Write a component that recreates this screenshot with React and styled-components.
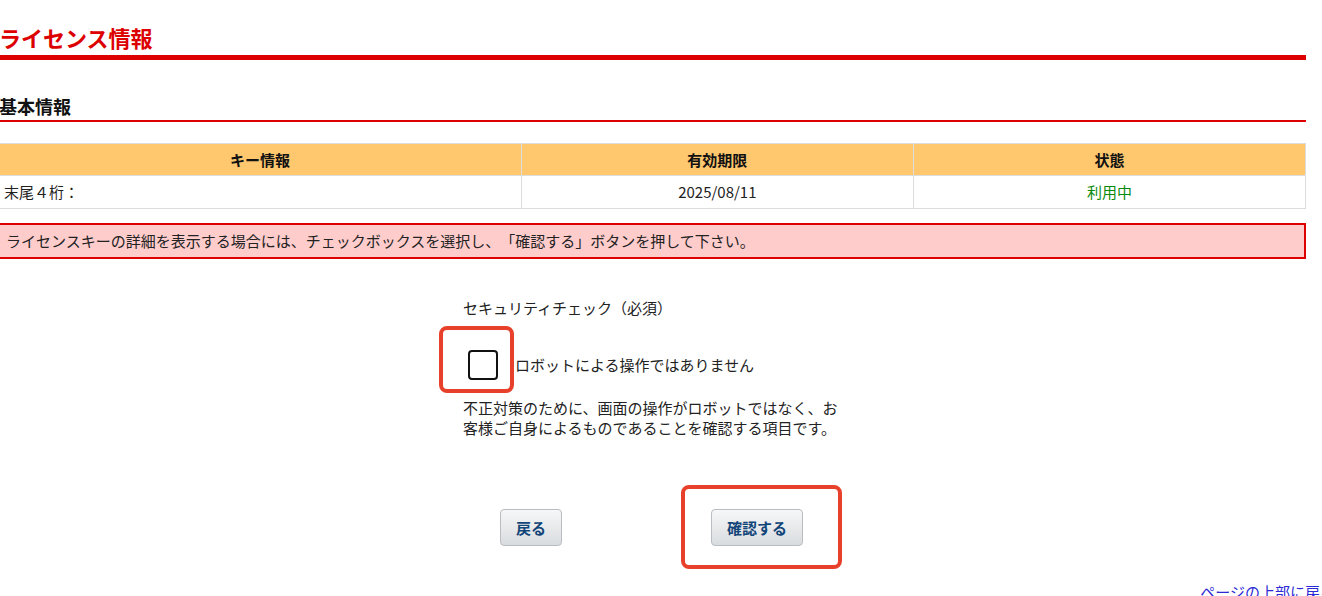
import React from "react";
import styled, { createGlobalStyle } from "styled-components";

const GlobalStyle = createGlobalStyle`
  html, body {
    margin: 0;
    padding: 0;
    overflow: hidden;
    background: #ffffff;
  }
  body {
    font-family: "Noto Sans CJK JP", "Noto Sans", sans-serif;
    font-size: 15px;
    color: #222222;
    text-spacing-trim: space-all;
  }
`;

const Page = styled.div`
  width: 1308px;
  margin-left: -2px;
`;

const Title = styled.h1`
  margin: 22px 0 0;
  font-size: 22px;
  line-height: 30px;
  font-weight: 700;
  color: #dd0000;
  padding: 0 0 3px 1px;
  border-bottom: 5px solid #dd0000;
`;

const SectionTitle = styled.h2`
  margin: 34px 0 0;
  font-size: 18px;
  line-height: 24px;
  font-weight: 700;
  color: #111111;
  padding: 0 0 2px 1px;
  border-bottom: 2px solid #dd0000;
`;

const Table = styled.table`
  margin-top: 21px;
  width: 100%;
  border-collapse: collapse;
  table-layout: fixed;
`;

const Th = styled.th`
  background: #ffc76e;
  border: 1px solid #dddddd;
  font-size: 15px;
  font-weight: 700;
  line-height: 31px;
  padding: 0 6px;
  color: #111111;
  text-align: center;
`;

const Td = styled.td`
  border: 1px solid #dddddd;
  font-size: 15px;
  line-height: 32px;
  padding: 0 5px;
  text-align: ${(p) => p.$align || "center"};
  color: ${(p) => p.$color || "#222222"};
`;

const Alert = styled.div`
  margin-top: 14px;
  border: 2px solid #dd0000;
  background: #ffcccc;
  padding: 0 6px;
  line-height: 32px;
  font-size: 15px;
  color: #222222;
`;

const Security = styled.div`
  width: 380px;
  margin: 39px auto 0;
  padding-left: 2px;
`;

const SecurityLabel = styled.div`
  line-height: 20px;
`;

const CheckRow = styled.label`
  display: flex;
  align-items: center;
  margin-top: 32px;
  line-height: 20px;
`;

const CheckWrap = styled.span`
  position: relative;
  display: inline-flex;
  margin: 0 17px 0 5px;
`;

const CheckBox = styled.span`
  display: block;
  width: 30px;
  height: 30px;
  box-sizing: border-box;
  border: 2px solid #111111;
  border-radius: 4px;
  background: #ffffff;
`;

const Highlight = styled.span`
  position: absolute;
  top: ${(p) => p.$top}px;
  left: ${(p) => p.$left}px;
  right: ${(p) => p.$right}px;
  bottom: ${(p) => p.$bottom}px;
  border: 4px solid #e8412b;
  border-radius: 8px;
  pointer-events: none;
`;

const Description = styled.p`
  margin: 18px 0 0;
  line-height: 20px;
`;

const ButtonRow = styled.div`
  display: flex;
  justify-content: center;
  gap: 149px;
  margin-top: 71px;
  padding-right: 1px;
`;

const ButtonWrap = styled.span`
  position: relative;
  display: inline-flex;
`;

const Button = styled.button`
  height: 37px;
  padding: 0 15px;
  border: 1px solid #b9bcc0;
  border-radius: 4px;
  background: linear-gradient(#f6f7f8, #d9dcdf);
  font-family: "Noto Sans CJK JP", "Noto Sans", sans-serif;
  font-size: 15px;
  font-weight: 700;
  color: #124578;
  cursor: pointer;
`;

const PageTopRow = styled.div`
  display: flex;
  justify-content: flex-end;
  margin-top: 36px;
  margin-right: -29px;
`;

const PageTopLink = styled.a`
  color: #2b2bd6;
  text-decoration: none;
  font-size: 15px;
  line-height: 20px;
  white-space: nowrap;
`;

export default function App() {
  return (
    <>
      <GlobalStyle />
      <Page>
        <Title>ライセンス情報</Title>
        <SectionTitle>基本情報</SectionTitle>
        <Table>
          <colgroup>
            <col style={{ width: "40%" }} />
            <col style={{ width: "30%" }} />
            <col style={{ width: "30%" }} />
          </colgroup>
          <thead>
            <tr>
              <Th>キー情報</Th>
              <Th>有効期限</Th>
              <Th>状態</Th>
            </tr>
          </thead>
          <tbody>
            <tr>
              <Td $align="left">末尾４桁：</Td>
              <Td>2025/08/11</Td>
              <Td $color="#0a8a0a">利用中</Td>
            </tr>
          </tbody>
        </Table>
        <Alert>
          ライセンスキーの詳細を表示する場合には、チェックボックスを選択し、「確認する」ボタンを押して下さい。
        </Alert>
        <Security>
          <SecurityLabel>セキュリティチェック（必須）</SecurityLabel>
          <CheckRow>
            <CheckWrap>
              <CheckBox />
              <Highlight $top={-24} $left={-29} $right={-16} $bottom={-13} />
            </CheckWrap>
            ロボットによる操作ではありません
          </CheckRow>
          <Description>
            不正対策のために、画面の操作がロボットではなく、お客様ご自身によるものであることを確認する項目です。
          </Description>
        </Security>
        <ButtonRow>
          <ButtonWrap>
            <Button type="button">戻る</Button>
          </ButtonWrap>
          <ButtonWrap>
            <Button type="button">確認する</Button>
            <Highlight $top={-24} $left={-30} $right={-39} $bottom={-23} />
          </ButtonWrap>
        </ButtonRow>
        <PageTopRow>
          <PageTopLink href="#">ページの上部に戻る</PageTopLink>
        </PageTopRow>
      </Page>
    </>
  );
}
